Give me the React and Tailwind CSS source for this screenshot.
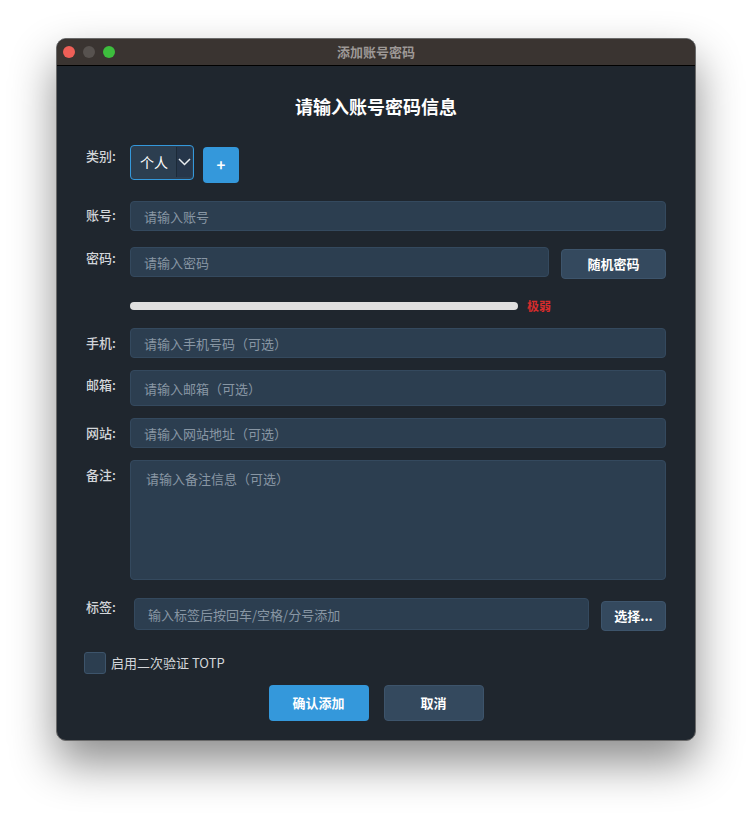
import React, { useState } from 'react';

const font = { fontFamily: '"Noto Sans CJK SC", "Noto Sans", "Liberation Sans", sans-serif' };

const Label = ({ children, pt = 'pt-[6px]', w = 'w-[44px]' }) => (
  <div className={`${w} shrink-0 ${pt} text-[13px] leading-[18px] font-medium text-[#d3d6da]`}>{children}</div>
);

const Input = ({ placeholder, h = 'h-[30px]', className = '' }) => (
  <input
    placeholder={placeholder}
    className={`${h} ${className} rounded-[4px] bg-[#2c3e50] border border-[#34495e] px-[13px] text-[13px] text-white placeholder:text-[#8896a4] outline-none`}
  />
);

export default function App() {
  const [totp, setTotp] = useState(false);

  return (
    <div className="min-h-screen bg-white pt-[38px] pl-[56px]" style={font}>
      <div className="w-[640px] h-[703px] rounded-[10px] overflow-hidden border border-[#6a6a6a] bg-[#1f262e] shadow-[0_22px_45px_rgba(0,0,0,0.45)] flex flex-col">
        {/* title bar */}
        <div className="h-[27px] shrink-0 bg-[#3a3431] border-b border-black flex items-center relative">
          <div className="flex items-center gap-[8px] pl-[6px]">
            <span className="w-[12px] h-[12px] rounded-full bg-[#ee5f57]" />
            <span className="w-[12px] h-[12px] rounded-full bg-[#57524f]" />
            <span className="w-[12px] h-[12px] rounded-full bg-[#3dbd3d]" />
          </div>
          <div className="absolute inset-0 flex items-center justify-center text-[13px] font-bold text-[#9d9896]">添加账号密码</div>
        </div>

        {/* body */}
        <div className="flex-1 px-[29px] pt-[28px]">
          <h1 className="h-[24px] leading-[24px] text-center text-[18px] font-bold text-white">请输入账号密码信息</h1>

          {/* 类别 */}
          <div className="mt-[27px] flex items-start">
            <Label pt="pt-[2px]">类别:</Label>
            <div className="w-[64px] h-[35px] rounded-[4px] border border-[#3498db] bg-[#2c3e50] flex items-stretch">
              <div className="flex-1 pl-[9px] flex items-center text-[14px] text-white">个人</div>
              <div className="w-[16px] mt-[1px] mb-[2px] mr-[1px] bg-[#26364a] border-l border-[#1c2a38] flex items-center justify-center">
                <svg width="13" height="8" viewBox="0 0 13 8" fill="none">
                  <path d="M1 1l5.5 5.5L12 1" stroke="#e8ecef" strokeWidth="1.5" />
                </svg>
              </div>
            </div>
            <button className="ml-[9px] mt-[2px] w-[36px] h-[36px] rounded-[4px] bg-[#3498db] text-white text-[15px] font-bold flex items-center justify-center">+</button>
          </div>

          {/* 账号 */}
          <div className="mt-[18px] flex items-start">
            <Label pt="pt-[5px]">账号:</Label>
            <Input placeholder="请输入账号" className="flex-1" />
          </div>

          {/* 密码 */}
          <div className="mt-[16px] flex items-start">
            <Label pt="pt-[2px]">密码:</Label>
            <Input placeholder="请输入密码" className="w-[419px]" />
            <button className="ml-[12px] mt-[2px] w-[105px] h-[30px] rounded-[4px] bg-[#34495e] border border-[#3d546b] text-white text-[13px] font-bold">随机密码</button>
          </div>

          {/* strength */}
          <div className="mt-[19px] h-[16px] flex items-center pl-[44px]">
            <div className="w-[388px] h-[8px] rounded-full bg-[#e0e0e0]" />
            <span className="ml-[9px] text-[12px] font-bold text-[#d62c2c]">极弱</span>
          </div>

          {/* 手机 */}
          <div className="mt-[14px] flex items-start">
            <Label>手机:</Label>
            <Input placeholder="请输入手机号码（可选）" className="flex-1" />
          </div>

          {/* 邮箱 */}
          <div className="mt-[12px] flex items-start">
            <Label>邮箱:</Label>
            <Input placeholder="请输入邮箱（可选）" h="h-[36px]" className="flex-1" />
          </div>

          {/* 网站 */}
          <div className="mt-[12px] flex items-start">
            <Label>网站:</Label>
            <Input placeholder="请输入网站地址（可选）" className="flex-1" />
          </div>

          {/* 备注 */}
          <div className="mt-[12px] flex items-start">
            <Label>备注:</Label>
            <textarea
              placeholder="请输入备注信息（可选）"
              className="flex-1 h-[120px] resize-none rounded-[4px] bg-[#2c3e50] border border-[#34495e] px-[15px] py-[9px] text-[13px] leading-[18px] text-white placeholder:text-[#8896a4] outline-none"
            />
          </div>

          {/* 标签 */}
          <div className="mt-[18px] flex items-start">
            <Label pt="pt-0" w="w-[48px]">标签:</Label>
            <Input placeholder="输入标签后按回车/空格/分号添加" h="h-[32px]" className="w-[455px]" />
            <button className="ml-[12px] mt-[3px] w-[65px] h-[30px] rounded-[4px] bg-[#34495e] border border-[#3d546b] text-white text-[13px] font-bold">选择...</button>
          </div>

          {/* TOTP */}
          <label className="mt-[21px] -ml-[2px] h-[22px] flex items-center gap-[5px] cursor-pointer">
            <span
              onClick={() => setTotp(!totp)}
              className={`w-[22px] h-[22px] rounded-[3px] border border-[#3d546b] ${totp ? 'bg-[#3498db]' : 'bg-[#2c3e50]'}`}
            />
            <span className="text-[13px] text-[#d3d6da]">启用二次验证 TOTP</span>
          </label>

          {/* actions */}
          <div className="mt-[11px] flex justify-center gap-[15px]">
            <button className="w-[100px] h-[36px] rounded-[4px] bg-[#3498db] text-white text-[13px] font-bold">确认添加</button>
            <button className="w-[100px] h-[36px] rounded-[4px] bg-[#34495e] border border-[#3d546b] text-white text-[13px] font-bold">取消</button>
          </div>
        </div>
      </div>
    </div>
  );
}
